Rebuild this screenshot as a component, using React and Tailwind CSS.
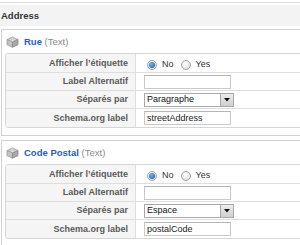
import React from 'react';

const BoxIcon = () => (
    <svg width="13" height="12" viewBox="0 0 13 12" className="shrink-0">
        <path d="M6.5 1 L12 3.5 L6.5 6 L1 3.5 Z" fill="#e2e2e2" stroke="#9a9a9a" strokeWidth="0.8" />
        <path d="M1 3.5 L6.5 6 L6.5 11.2 L1 8.7 Z" fill="#c4c4c4" stroke="#9a9a9a" strokeWidth="0.8" />
        <path d="M12 3.5 L6.5 6 L6.5 11.2 L12 8.7 Z" fill="#a8a8a8" stroke="#8a8a8a" strokeWidth="0.8" />
        <ellipse cx="4.6" cy="3.2" rx="1.3" ry="0.7" fill="#f4f4f4" stroke="#a0a0a0" strokeWidth="0.5" />
        <ellipse cx="8.4" cy="3.2" rx="1.3" ry="0.7" fill="#f4f4f4" stroke="#a0a0a0" strokeWidth="0.5" />
    </svg>
);

const Radio = ({ checked }) => (
    <span className="w-[10px] h-[10px] rounded-full border border-[#a4a4a4] bg-[radial-gradient(circle_at_40%_35%,#ffffff,#d6d6d6)] flex items-center justify-center shrink-0">
        {checked && <span className="w-[6px] h-[6px] rounded-full bg-[radial-gradient(circle_at_40%_35%,#6fb6f0,#10559e)]" />}
    </span>
);

const TextInput = ({ value }) => (
    <div className="w-[87px] h-[14px] border border-[#c9c9c9] border-t-[#b5b5b5] bg-white flex items-center pl-[2px] text-[#222]">
        {value}
    </div>
);

const Select = ({ value }) => (
    <div className="w-[90px] h-[14px] border border-[#a9a9a9] bg-white flex items-center text-[#111]">
        <span className="flex-1 pl-[2px]">{value}</span>
        <span className="w-[13px] h-full border-l border-[#a9a9a9] bg-[linear-gradient(#ececec,#cfcfcf)] flex items-center justify-center">
            <svg width="6" height="4" viewBox="0 0 6 4"><path d="M0 0 L6 0 L3 3.5 Z" fill="#111" /></svg>
        </span>
    </div>
);

const Row = ({ label, first, last, children }) => (
    <div className={`flex ${first ? 'h-[19px]' : 'h-[18px]'} ${last ? '' : 'border-b border-[#dedede]'}`}>
        <div className="w-[130px] shrink-0 bg-[#f5f5f5] border-r border-[#dedede] flex items-center justify-end pr-[7px] font-bold text-[#5a5a5a]">
            {label}
        </div>
        <div className="flex-1 flex items-center pl-[8px]">{children}</div>
    </div>
);

const Field = ({ title, sep, schema }) => (
    <div className="w-[310px] border border-[#d2d2d2] pl-[3px] pb-[7px]">
        <div className="h-[23px] flex items-center gap-[5px] pl-[1px] pt-[1px]">
            <BoxIcon />
            <span className="text-[9.5px]">
                <span className="font-bold text-[#1f5fbf]">{title}</span>{' '}
                <span className="text-[#8a8a8a]">(Text)</span>
            </span>
        </div>
        <div className="border border-[#d6d6d6] rounded-[3px] overflow-hidden">
            <Row label="Afficher l’étiquette" first>
                <div className="flex items-center pt-[3px] pl-[3px]">
                    <Radio checked />
                    <span className="ml-[5px] text-[#333]">No</span>
                    <span className="ml-[7px]"><Radio /></span>
                    <span className="ml-[5px] text-[#333]">Yes</span>
                </div>
            </Row>
            <Row label="Label Alternatif">
                <TextInput value="" />
            </Row>
            <Row label="Séparés par">
                <Select value={sep} />
            </Row>
            <Row label="Schema.org label" last>
                <TextInput value={schema} />
            </Row>
        </div>
    </div>
);

const App = () => {
    return (
        <div className="w-[300px] h-[245px] overflow-hidden bg-white font-['Liberation_Sans',Arial,sans-serif] text-[9px] leading-none">
            <div className="h-[2px]" />
            <div className="border-t border-[#dcdcdc] pt-[2px]">
                <div className="h-[21px] bg-[#f3f3f3] flex items-center pl-[1px] font-bold text-[#333] text-[9.5px]">
                    Address
                </div>
            </div>
            <div className="pt-[3px] pl-[1px] flex flex-col gap-[4px]">
                <Field title="Rue" sep="Paragraphe" schema="streetAddress" />
                <Field title="Code Postal" sep="Espace" schema="postalCode" />
            </div>
        </div>
    );
};

export default App;
